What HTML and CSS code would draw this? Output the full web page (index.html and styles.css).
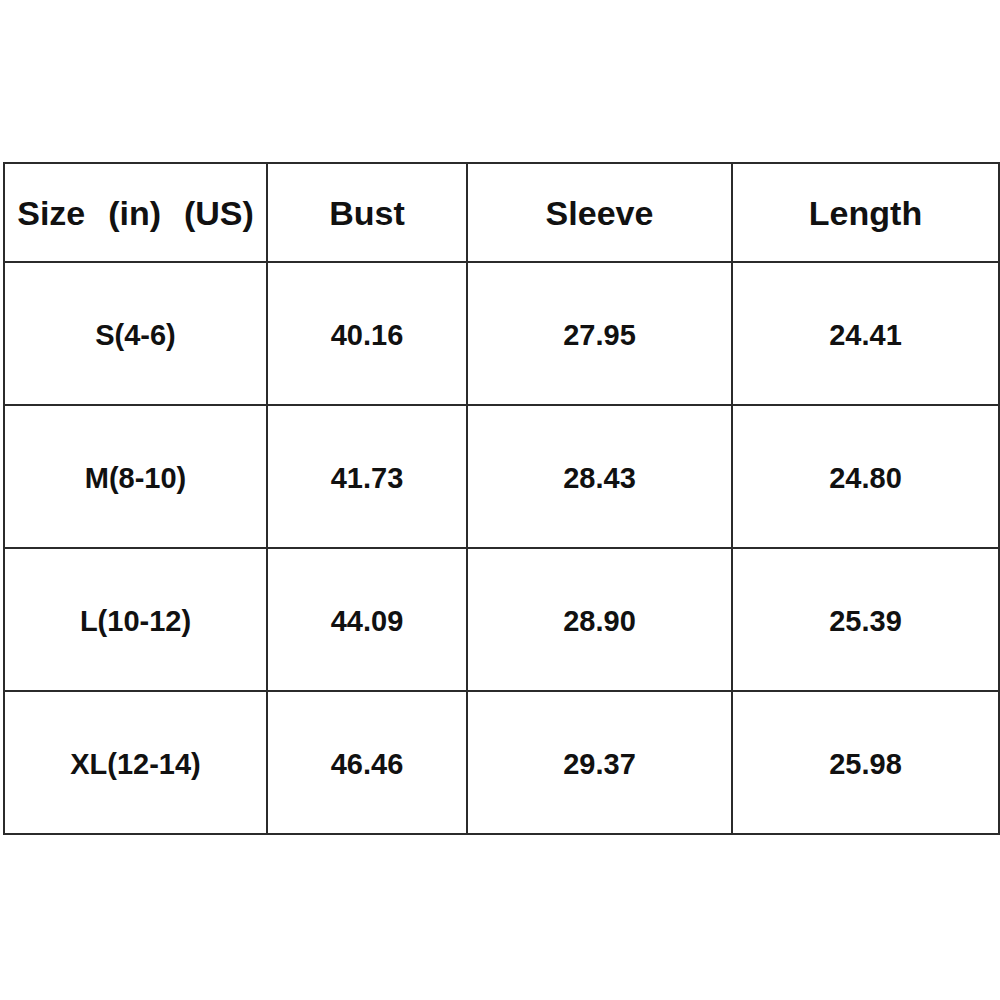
FILE: index.html
```html
<!DOCTYPE html>
<html>
<head>
<meta charset="utf-8">
<link rel="stylesheet" href="styles.css">
</head>
<body>
<div class="page">
  <table class="sizes">
    <colgroup>
      <col class="c1"><col class="c2"><col class="c3"><col class="c4">
    </colgroup>
    <thead>
      <tr class="head">
        <th class="first">Size  (in)  (US)</th>
        <th>Bust</th>
        <th>Sleeve</th>
        <th>Length</th>
      </tr>
    </thead>
    <tbody>
      <tr><td>S(4-6)</td><td>40.16</td><td>27.95</td><td>24.41</td></tr>
      <tr><td>M(8-10)</td><td>41.73</td><td>28.43</td><td>24.80</td></tr>
      <tr><td>L(10-12)</td><td>44.09</td><td>28.90</td><td>25.39</td></tr>
      <tr><td>XL(12-14)</td><td>46.46</td><td>29.37</td><td>25.98</td></tr>
    </tbody>
  </table>
</div>
</body>
</html>
```
FILE: styles.css
```css
html, body {
  margin: 0;
  padding: 0;
  background: #ffffff;
}
.page {
  padding: 162px 0 0 3px;
}
.sizes {
  border-collapse: collapse;
  table-layout: fixed;
  width: 995px;
  font-family: "Liberation Sans", Arial, sans-serif;
  font-weight: bold;
  color: #111;
}
.c1 { width: 263px; }
.c2 { width: 200px; }
.c3 { width: 265px; }
.c4 { width: 267px; }
.sizes th, .sizes td {
  border: 2px solid #2b2b2b;
  text-align: center;
  vertical-align: middle;
  padding: 0;
}
.sizes th {
  height: 95px;
  font-size: 34px;
  white-space: pre;
  padding-top: 2px;
}
.sizes td {
  height: 137px;
  font-size: 29px;
  padding-top: 4px;
}
.sizes th.first {
  word-spacing: 2px;
}
```
